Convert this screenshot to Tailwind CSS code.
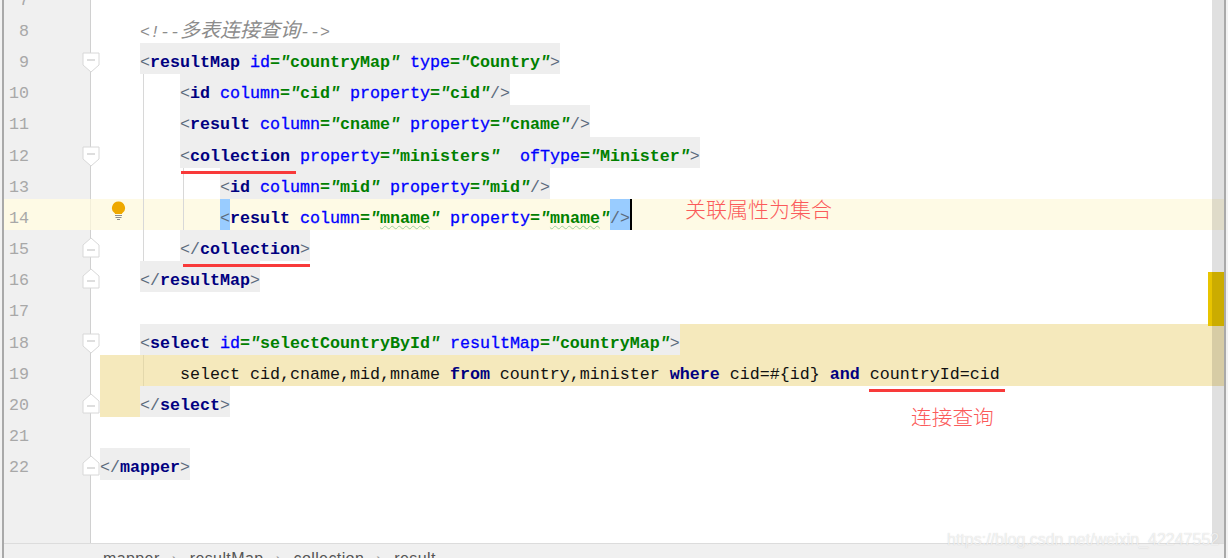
<!DOCTYPE html>
<html><head><meta charset="utf-8"><script src="https://cdn.jsdelivr.net/npm/@tailwindcss/browser@4"></script></head>
<body class="bg-[#f2f2f2]">
<div class="relative h-[558px] w-[1228px] overflow-hidden font-['Liberation_Mono','Noto_Sans_CJK_SC',monospace] text-[16.67px] leading-[39px] text-[#111] [&_span]:whitespace-pre [&_b]:font-bold [&_b]:text-[#000080] [&_u]:no-underline [&_u]:text-[#0000ff] [&_u]:[-webkit-text-stroke:0.3px] [&_i]:not-italic [&_i]:font-bold [&_i]:text-[#008000] [&_em]:italic [&_s]:no-underline [&_s]:text-[#5b6b7d]">
<div class="mx-[2px] flex h-full flex-col border-x-2 border-[#a9a9a9]">
<div class="relative flex-1 overflow-hidden bg-white">
<div class="-mt-[19.4px] flex h-[calc(100%+19.4px)] flex-col">

<div class="flex h-[31.2px]"><div class="relative w-[87px] border-r border-[#d0d0d0] bg-[#f0f0f0]"><div class="w-[25px] text-right text-[#a8a8a8]">7</div></div><div class="flex-1"></div></div>

<div class="flex h-[31.2px]"><div class="relative w-[87px] border-r border-[#d0d0d0] bg-[#f0f0f0]"><div class="w-[25px] text-right text-[#a8a8a8]">8</div></div><div class="ml-[9px] flex flex-1 pl-[40px]"><span class="italic text-[#8c8c8c]">&lt;!--<span class="text-[20px]">多表连接查询</span>--&gt;</span></div></div>

<div class="flex h-[31.2px]"><div class="relative w-[87px] border-r border-[#d0d0d0] bg-[#f0f0f0]"><div class="w-[25px] text-right text-[#a8a8a8]">9</div>
<svg class="absolute left-[78px] top-[9px]" width="18" height="21" viewBox="0 0 18 21"><path d="M1 1H17V13L9 20L1 13Z" fill="#fff" stroke="#d8d8d8"/><path d="M5 8H13" stroke="#bdbdbd"/></svg></div><div class="ml-[9px] flex flex-1 pl-[40px]"><span class="bg-[#eeeeee]"><s>&lt;</s><b>resultMap</b> <u>id</u><i>=<em>"</em>countryMap<em>"</em></i> <u>type</u><i>=<em>"</em>Country<em>"</em></i><s>&gt;</s></span></div></div>

<div class="flex h-[31.2px]"><div class="relative w-[87px] border-r border-[#d0d0d0] bg-[#f0f0f0]"><div class="w-[25px] text-right text-[#a8a8a8]">10</div></div><div class="ml-[9px] flex flex-1 pl-[80px]"><span class="bg-[#eeeeee]"><s>&lt;</s><b>id</b> <u>column</u><i>=<em>"</em>cid<em>"</em></i> <u>property</u><i>=<em>"</em>cid<em>"</em></i><s>/&gt;</s></span></div></div>

<div class="flex h-[31.2px]"><div class="relative w-[87px] border-r border-[#d0d0d0] bg-[#f0f0f0]"><div class="w-[25px] text-right text-[#a8a8a8]">11</div></div><div class="ml-[9px] flex flex-1 pl-[80px]"><span class="bg-[#eeeeee]"><s>&lt;</s><b>result</b> <u>column</u><i>=<em>"</em>cname<em>"</em></i> <u>property</u><i>=<em>"</em>cname<em>"</em></i><s>/&gt;</s></span></div></div>

<div class="flex h-[31.2px]"><div class="relative w-[87px] border-r border-[#d0d0d0] bg-[#f0f0f0]"><div class="w-[25px] text-right text-[#a8a8a8]">12</div>
<svg class="absolute left-[78px] top-[9px]" width="18" height="21" viewBox="0 0 18 21"><path d="M1 1H17V13L9 20L1 13Z" fill="#fff" stroke="#d8d8d8"/><path d="M5 8H13" stroke="#bdbdbd"/></svg></div><div class="ml-[9px] flex flex-1 pl-[80px]"><span class="bg-[#eeeeee]"><s>&lt;</s><b>collection</b> <u>property</u><i>=<em>"</em>ministers<em>"</em></i>  <u>ofType</u><i>=<em>"</em>Minister<em>"</em></i><s>&gt;</s></span></div></div>

<div class="flex h-[31.2px]"><div class="relative w-[87px] border-r border-[#d0d0d0] bg-[#f0f0f0]"><div class="w-[25px] text-right text-[#a8a8a8]">13</div></div><div class="ml-[9px] flex flex-1 pl-[120px]"><span class="bg-[#eeeeee]"><s>&lt;</s><b>id</b> <u>column</u><i>=<em>"</em>mid<em>"</em></i> <u>property</u><i>=<em>"</em>mid<em>"</em></i><s>/&gt;</s></span></div></div>

<div class="relative flex h-[31.2px] bg-[#fefae5]"><div class="relative w-[87px] border-r border-[#f2eed9]"><div class="w-[25px] text-right text-[#a8a8a8]">14</div></div>
<svg class="absolute left-[107px] top-[2px]" width="15" height="19" viewBox="0 0 15 19"><path d="M7.5 0.5A6.5 6.5 0 0 1 11 12.5V13H4V12.5A6.5 6.5 0 0 1 7.5 0.5Z" fill="#eea800"/><path d="M4 14.5H11M4.5 16.5H10.5M6 18.5H9" stroke="#8c8c8c"/></svg>
<div class="ml-[9px] flex flex-1 pl-[120px]"><span class="relative flex h-[31.2px] items-start"><span class="h-[31.2px] bg-[#99ccff]"><s>&lt;</s></span><span><b>result</b> <u>column</u><i>=<em>"</em><span class="underline decoration-wavy decoration-[#9fcf9f] decoration-1 underline-offset-2">mname</span><em>"</em></i> <u>property</u><i>=<em>"</em><span class="underline decoration-wavy decoration-[#9fcf9f] decoration-1 underline-offset-2">mname</span><em>"</em></i></span><span class="h-[31.2px] bg-[#99ccff]"><s>/&gt;</s></span></span><span class="h-full w-[2px] bg-black"></span></div></div>

<div class="flex h-[31.2px]"><div class="relative w-[87px] border-r border-[#d0d0d0] bg-[#f0f0f0]"><div class="w-[25px] text-right text-[#a8a8a8]">15</div>
<svg class="absolute left-[78px] top-[7px]" width="18" height="21" viewBox="0 0 18 21"><path d="M1 20H17V8L9 1L1 8Z" fill="#fff" stroke="#d8d8d8"/><path d="M5 13H13" stroke="#bdbdbd"/></svg></div><div class="ml-[9px] flex flex-1 pl-[80px]"><span class="bg-[#eeeeee]"><s>&lt;/</s><b>collection</b><s>&gt;</s></span></div></div>

<div class="flex h-[31.2px]"><div class="relative w-[87px] border-r border-[#d0d0d0] bg-[#f0f0f0]"><div class="w-[25px] text-right text-[#a8a8a8]">16</div>
<svg class="absolute left-[78px] top-[7px]" width="18" height="21" viewBox="0 0 18 21"><path d="M1 20H17V8L9 1L1 8Z" fill="#fff" stroke="#d8d8d8"/><path d="M5 13H13" stroke="#bdbdbd"/></svg></div><div class="ml-[9px] flex flex-1 pl-[40px]"><span class="bg-[#eeeeee]"><s>&lt;/</s><b>resultMap</b><s>&gt;</s></span></div></div>

<div class="flex h-[31.2px]"><div class="relative w-[87px] border-r border-[#d0d0d0] bg-[#f0f0f0]"><div class="w-[25px] text-right text-[#a8a8a8]">17</div></div><div class="flex-1"></div></div>

<div class="flex h-[31.2px]"><div class="relative w-[87px] border-r border-[#d0d0d0] bg-[#f0f0f0]"><div class="w-[25px] text-right text-[#a8a8a8]">18</div>
<svg class="absolute left-[78px] top-[9px]" width="18" height="21" viewBox="0 0 18 21"><path d="M1 1H17V13L9 20L1 13Z" fill="#fff" stroke="#d8d8d8"/><path d="M5 8H13" stroke="#bdbdbd"/></svg></div><div class="ml-[9px] flex flex-1 pl-[40px]"><span class="bg-[#eeeeee]"><s>&lt;</s><b>select</b> <u>id</u><i>=<em>"</em>selectCountryById<em>"</em></i> <u>resultMap</u><i>=<em>"</em>countryMap<em>"</em></i><s>&gt;</s></span><span class="flex-1 bg-[#f5e9bc]"></span></div></div>

<div class="flex h-[31.2px]"><div class="relative w-[87px] border-r border-[#d0d0d0] bg-[#f0f0f0]"><div class="w-[25px] text-right text-[#a8a8a8]">19</div></div><div class="ml-[9px] flex flex-1 bg-[#f5e9bc] pl-[80px]"><span>select cid,cname,mid,mname <b>from</b> country,minister <b>where</b> cid=#{id} <b>and</b> countryId=cid</span></div></div>

<div class="flex h-[31.2px]"><div class="relative w-[87px] border-r border-[#d0d0d0] bg-[#f0f0f0]"><div class="w-[25px] text-right text-[#a8a8a8]">20</div>
<svg class="absolute left-[78px] top-[7px]" width="18" height="21" viewBox="0 0 18 21"><path d="M1 20H17V8L9 1L1 8Z" fill="#fff" stroke="#d8d8d8"/><path d="M5 13H13" stroke="#bdbdbd"/></svg></div><div class="ml-[9px] flex flex-1"><span class="w-[40px] bg-[#f5e9bc]"></span><span class="bg-[#eeeeee]"><s>&lt;/</s><b>select</b><s>&gt;</s></span></div></div>

<div class="flex h-[31.2px]"><div class="relative w-[87px] border-r border-[#d0d0d0] bg-[#f0f0f0]"><div class="w-[25px] text-right text-[#a8a8a8]">21</div></div><div class="flex-1"></div></div>

<div class="flex h-[31.2px]"><div class="relative w-[87px] border-r border-[#d0d0d0] bg-[#f0f0f0]"><div class="w-[25px] text-right text-[#a8a8a8]">22</div>
<svg class="absolute left-[78px] top-[7px]" width="18" height="21" viewBox="0 0 18 21"><path d="M1 20H17V8L9 1L1 8Z" fill="#fff" stroke="#d8d8d8"/><path d="M5 13H13" stroke="#bdbdbd"/></svg></div><div class="ml-[9px] flex flex-1"><span class="bg-[#eeeeee]"><s>&lt;/</s><b>mapper</b><s>&gt;</s></span></div></div>

<div class="flex flex-1"><div class="w-[87px] border-r border-[#d0d0d0] bg-[#f0f0f0]"></div><div class="flex-1"></div></div>
</div>

<div class="absolute left-[139px] top-[74px] h-[187px] w-px bg-[#d8d8d8]"></div>
<div class="absolute left-[139px] top-[355px] h-[31px] w-px bg-[#e3d8ac]"></div>
<div class="absolute left-[179px] top-[168px] h-[62px] w-px bg-[#d8d8d8]"></div>
<div class="absolute left-[1204px] top-[272px] h-[54px] w-[17px] bg-[#e8c400]"></div>
<div class="absolute left-[1208px] top-0 h-full w-[12px] bg-black/12"></div>
</div>
<div class="flex h-[15px] overflow-hidden border-t border-[#dcdcdc] bg-[#f0f0f0] pl-[99px] pt-[5px] font-['Liberation_Sans',sans-serif] text-[16px] leading-[20px] tracking-[0.4px] text-[#555]"><span>mapper</span><span class="w-[30px] text-center text-[#999]">›</span><span>resultMap</span><span class="w-[30px] text-center text-[#999]">›</span><span>collection</span><span class="w-[30px] text-center text-[#999]">›</span><span>result</span></div>
</div>

<div class="absolute left-[181px] top-[171px] h-[3px] w-[115px] bg-[#f83a3a]"></div>
<div class="absolute left-[183px] top-[264px] h-[3px] w-[127px] bg-[#f83a3a]"></div>
<div class="absolute left-[869px] top-[389px] h-[3px] w-[136px] bg-[#f83a3a]"></div>
<div class="absolute left-[685px] top-[193px] font-['Noto_Sans_CJK_SC',sans-serif] text-[21px] leading-[30px] font-light text-[#fb5a5a]">关联属性为集合</div>
<div class="absolute left-[911px] top-[401px] font-['Noto_Sans_CJK_SC',sans-serif] text-[20.7px] leading-[30px] font-light text-[#fb5a5a]">连接查询</div>
<div class="absolute left-[947px] top-[530px] font-['Liberation_Sans',sans-serif] text-[16px] leading-[20px] text-white/70 [text-shadow:0_0_1px_rgba(170,170,170,0.6)]">https://blog.csdn.net/weixin_42247552</div>
</div>
</body></html>
